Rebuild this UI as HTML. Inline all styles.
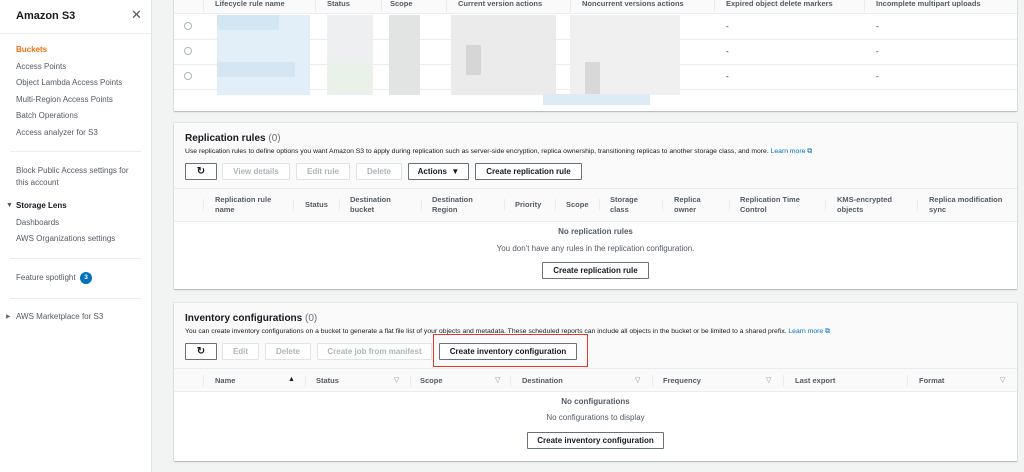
<!DOCTYPE html>
<html><head><meta charset="utf-8"><style>
*{margin:0;padding:0;box-sizing:border-box}
body{width:1024px;height:472px;overflow:hidden;background:#f2f3f3;font-family:"Liberation Sans",Arial,sans-serif;color:#16191f;position:relative;font-size:8px}
.a{position:absolute;white-space:nowrap}
#side{position:absolute;left:0;top:0;width:152px;height:472px;background:#fff;border-right:1px solid #e4e6e6}
.nav{position:absolute;left:16px;font-size:8px;color:#545b64}
.hr{position:absolute;height:1px;background:#eaeded}
.panel{position:absolute;left:174px;width:843px;background:#fff;box-shadow:0 1px 1px rgba(0,31,63,.25),0 0 0 1px #e5e7e7}
.gray{background:#fafafa}
.th{position:absolute;font-weight:bold;font-size:7.5px;color:#545b64;line-height:10px}
.sep{position:absolute;width:1px;height:12px;background:#eaeded}
.btn{position:absolute;height:17px;border:1px solid #aab7b8;background:#fff;font-size:8px;font-weight:bold;color:#545b64;text-align:center;line-height:15px;border-radius:1px}
.dis{color:#aab7b8;border-color:#e1e4e5}
.dk{color:#16191f;border-color:#687078}
.t{font-size:10px;font-weight:bold}
.t span{font-weight:normal;color:#687078}
.desc{font-size:6.8px;color:#16191f}
.lm{color:#0073bb}
.blk{position:absolute}
.ref{font-size:10px}
</style></head><body>
<div id="side">
<div class="a" style="left:16px;top:10px;font-size:11px;font-weight:bold">Amazon S3</div>
<div class="a" style="left:131px;top:7px;font-size:13px;color:#545b64">✕</div>
<div class="hr" style="left:0;top:33px;width:151px"></div>
<div class="nav a" style="top:45px;color:#ec7211;font-weight:bold">Buckets</div>
<div class="nav a" style="top:62px">Access Points</div>
<div class="nav a" style="top:78px">Object Lambda Access Points</div>
<div class="nav a" style="top:95px">Multi-Region Access Points</div>
<div class="nav a" style="top:111px">Batch Operations</div>
<div class="nav a" style="top:128px">Access analyzer for S3</div>
<div class="hr" style="left:10px;top:151px;width:131px"></div>
<div class="nav a" style="top:166px">Block Public Access settings for</div>
<div class="nav a" style="top:178px">this account</div>
<div class="a" style="left:6px;top:202px;font-size:7px;color:#545b64">▼</div>
<div class="nav a" style="top:201px;color:#16191f;font-weight:bold;left:16px">Storage Lens</div>
<div class="nav a" style="top:218px">Dashboards</div>
<div class="nav a" style="top:234px">AWS Organizations settings</div>
<div class="hr" style="left:10px;top:258px;width:131px"></div>
<div class="nav a" style="top:273px">Feature spotlight</div>
<div class="a" style="left:80px;top:272px;width:12px;height:12px;border-radius:6px;background:#0073bb;color:#fff;font-size:6.5px;font-weight:bold;text-align:center;line-height:12px">3</div>
<div class="hr" style="left:10px;top:298px;width:131px"></div>
<div class="a" style="left:6px;top:313px;font-size:6px;color:#687078">▶</div>
<div class="nav a" style="top:312px">AWS Marketplace for S3</div>
</div>

<!-- panel 1 -->
<div class="panel" style="top:-2px;height:113px">
<div class="gray" style="position:absolute;left:0;top:0;width:843px;height:16px;border-bottom:1px solid #eaeded"></div>
<div class="th" style="left:41px;top:1px">Lifecycle rule name</div>
<div class="th" style="left:153px;top:1px">Status</div>
<div class="th" style="left:216px;top:1px">Scope</div>
<div class="th" style="left:284px;top:1px">Current version actions</div>
<div class="th" style="left:408px;top:1px">Noncurrent versions actions</div>
<div class="th" style="left:552px;top:1px">Expired object delete markers</div>
<div class="th" style="left:702px;top:1px">Incomplete multipart uploads</div>
<div class="sep" style="left:29px;top:2px"></div><div class="sep" style="left:141px;top:2px"></div><div class="sep" style="left:207px;top:2px"></div><div class="sep" style="left:272px;top:2px"></div><div class="sep" style="left:396px;top:2px"></div><div class="sep" style="left:540px;top:2px"></div><div class="sep" style="left:690px;top:2px"></div>
<div class="hr" style="left:0;top:41px;width:843px"></div>
<div class="hr" style="left:0;top:66px;width:843px"></div>
<div class="hr" style="left:0;top:91px;width:843px"></div>
<div class="a" style="left:10px;top:24px;width:8px;height:8px;border:1px solid #aab7b8;border-radius:4px"></div>
<div class="a" style="left:10px;top:49px;width:8px;height:8px;border:1px solid #aab7b8;border-radius:4px"></div>
<div class="a" style="left:10px;top:74px;width:8px;height:8px;border:1px solid #aab7b8;border-radius:4px"></div>
<div class="blk" style="left:43px;top:17px;width:93px;height:80px;background:#e3eff8"></div>
<div class="blk" style="left:43px;top:17px;width:62px;height:15px;background:#d2e6f4"></div>
<div class="blk" style="left:43px;top:64px;width:78px;height:15px;background:#d4e6f3"></div>
<div class="blk" style="left:153px;top:17px;width:46px;height:80px;background:#eeeff0"></div>
<div class="blk" style="left:153px;top:64px;width:46px;height:31px;background:#e9f2e9"></div>
<div class="blk" style="left:215px;top:17px;width:31px;height:80px;background:#e2e3e3"></div>
<div class="blk" style="left:277px;top:17px;width:105px;height:80px;background:#ebebeb"></div>
<div class="blk" style="left:292px;top:47px;width:15px;height:30px;background:#d6d6d6"></div>
<div class="blk" style="left:396px;top:17px;width:110px;height:80px;background:#f0f0f0"></div>
<div class="blk" style="left:411px;top:64px;width:15px;height:32px;background:#d8d8d8"></div>
<div class="blk" style="left:369px;top:96px;width:107px;height:11px;background:#ddebf5"></div>
<div class="a" style="left:552px;top:24px;font-size:8px">-</div><div class="a" style="left:702px;top:24px;font-size:8px">-</div>
<div class="a" style="left:552px;top:49px;font-size:8px">-</div><div class="a" style="left:702px;top:49px;font-size:8px">-</div>
<div class="a" style="left:552px;top:74px;font-size:8px">-</div><div class="a" style="left:702px;top:74px;font-size:8px">-</div>
</div>

<!-- panel 2 -->
<div class="panel" style="top:123px;height:166px">
<div class="gray" style="position:absolute;left:0;top:0;width:843px;height:99px;border-bottom:1px solid #eaeded"></div>
<div class="a t" style="left:11px;top:10px">Replication rules <span>(0)</span></div>
<div class="a desc" style="left:11px;top:25px">Use replication rules to define options you want Amazon S3 to apply during replication such as server-side encryption, replica ownership, transitioning replicas to another storage class, and more. <span class="lm">Learn more ⧉</span></div>
<div class="btn dk ref" style="left:11px;top:40px;width:32px">↻</div>
<div class="btn dis" style="left:48px;top:40px;width:68px">View details</div>
<div class="btn dis" style="left:122px;top:40px;width:54px">Edit rule</div>
<div class="btn dis" style="left:182px;top:40px;width:46px">Delete</div>
<div class="btn dk" style="left:234px;top:40px;width:61px">Actions &nbsp;▼</div>
<div class="btn dk" style="left:301px;top:40px;width:107px">Create replication rule</div>
<div class="hr" style="left:0;top:65px;width:843px"></div>
<div class="th" style="left:41px;top:72px">Replication rule<br>name</div>
<div class="th" style="left:131px;top:77px">Status</div>
<div class="th" style="left:176px;top:72px">Destination<br>bucket</div>
<div class="th" style="left:258px;top:72px">Destination<br>Region</div>
<div class="th" style="left:341px;top:77px">Priority</div>
<div class="th" style="left:392px;top:77px">Scope</div>
<div class="th" style="left:436px;top:72px">Storage<br>class</div>
<div class="th" style="left:500px;top:72px">Replica<br>owner</div>
<div class="th" style="left:566px;top:72px">Replication Time<br>Control</div>
<div class="th" style="left:663px;top:72px">KMS-encrypted<br>objects</div>
<div class="th" style="left:755px;top:72px">Replica modification<br>sync</div>
<div class="sep" style="left:29px;top:76px"></div><div class="sep" style="left:119px;top:76px"></div><div class="sep" style="left:165px;top:76px"></div><div class="sep" style="left:247px;top:76px"></div><div class="sep" style="left:330px;top:76px"></div><div class="sep" style="left:381px;top:76px"></div><div class="sep" style="left:425px;top:76px"></div><div class="sep" style="left:488px;top:76px"></div><div class="sep" style="left:555px;top:76px"></div><div class="sep" style="left:651px;top:76px"></div><div class="sep" style="left:743px;top:76px"></div>
<div class="a" style="left:0;width:843px;text-align:center;top:104px;font-weight:bold;font-size:8px;color:#545b64">No replication rules</div>
<div class="a" style="left:0;width:843px;text-align:center;top:121px;font-size:8px;color:#545b64">You don't have any rules in the replication configuration.</div>
<div class="btn dk" style="left:368px;top:139px;width:107px">Create replication rule</div>
</div>

<!-- panel 3 -->
<div class="panel" style="top:303px;height:158px">
<div class="gray" style="position:absolute;left:0;top:0;width:843px;height:89px;border-bottom:1px solid #eaeded"></div>
<div class="a t" style="left:11px;top:10px">Inventory configurations <span>(0)</span></div>
<div class="a desc" style="left:11px;top:25px">You can create inventory configurations on a bucket to generate a flat file list of your objects and metadata. These scheduled reports can include all objects in the bucket or be limited to a shared prefix. <span class="lm">Learn more ⧉</span></div>
<div class="btn dk ref" style="left:11px;top:40px;width:32px">↻</div>
<div class="btn dis" style="left:48px;top:40px;width:37px">Edit</div>
<div class="btn dis" style="left:91px;top:40px;width:46px">Delete</div>
<div class="btn dis" style="left:143px;top:40px;width:115px">Create job from manifest</div>
<div class="btn dk" style="left:265px;top:40px;width:138px">Create inventory configuration</div>
<div class="a" style="left:259px;top:31px;width:155px;height:33px;border:1.5px solid #e8382a"></div>
<div class="hr" style="left:0;top:65px;width:843px"></div>
<div class="th" style="left:41px;top:73px">Name</div><div class="a" style="left:114px;top:73px;font-size:7px">▲</div>
<div class="th" style="left:142px;top:73px">Status</div><div class="a" style="left:220px;top:73px;font-size:7px;color:#879596">▽</div>
<div class="th" style="left:246px;top:73px">Scope</div><div class="a" style="left:321px;top:73px;font-size:7px;color:#879596">▽</div>
<div class="th" style="left:348px;top:73px">Destination</div><div class="a" style="left:461px;top:73px;font-size:7px;color:#879596">▽</div>
<div class="th" style="left:489px;top:73px">Frequency</div><div class="a" style="left:592px;top:73px;font-size:7px;color:#879596">▽</div>
<div class="th" style="left:621px;top:73px">Last export</div>
<div class="th" style="left:745px;top:73px">Format</div><div class="a" style="left:826px;top:73px;font-size:7px;color:#879596">▽</div>
<div class="sep" style="left:29px;top:72px"></div><div class="sep" style="left:131px;top:72px"></div><div class="sep" style="left:236px;top:72px"></div><div class="sep" style="left:336px;top:72px"></div><div class="sep" style="left:478px;top:72px"></div><div class="sep" style="left:609px;top:72px"></div><div class="sep" style="left:733px;top:72px"></div>
<div class="a" style="left:0;width:843px;text-align:center;top:94px;font-weight:bold;font-size:8px;color:#545b64">No configurations</div>
<div class="a" style="left:0;width:843px;text-align:center;top:110px;font-size:8px;color:#545b64">No configurations to display</div>
<div class="btn dk" style="left:353px;top:129px;width:137px">Create inventory configuration</div>
</div>
</body></html>
